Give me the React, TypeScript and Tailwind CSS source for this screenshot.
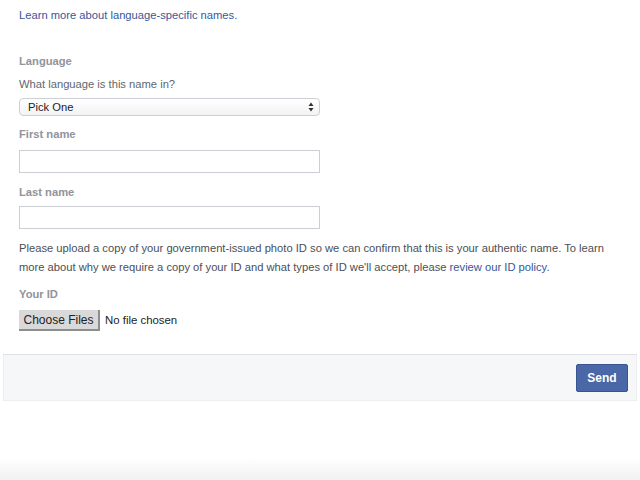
import React from 'react';

export default function App() {
  return (
    <div className="h-[480px] bg-white flex flex-col text-[11.2px] font-['Liberation_Sans',Arial,sans-serif]">
      <div className="px-[19px]">
        <p className="pt-[7px] leading-4 text-[#365899]">Learn more about language-specific names.</p>

        <div className="mt-[30px] leading-4 font-bold text-[#90949c]">Language</div>
        <div className="mt-[7px] leading-4 text-[#606770]">What language is this name in?</div>
        <div className="relative mt-[6px] h-[18px] w-[301px]">
          <select className="appearance-none w-full h-full rounded-[4px] border border-[#ccd0d5] bg-gradient-to-b from-white to-[#f3f3f3] pl-[8px] text-[11.2px] leading-4 text-[#1d2129] outline-none">
            <option>Pick One</option>
          </select>
          <svg className="absolute right-[6px] top-[4px] pointer-events-none" width="6" height="10" viewBox="0 0 6 10">
            <path d="M3 0.5 L5.5 4 H0.5 Z" fill="#333" />
            <path d="M3 9.5 L5.5 6 H0.5 Z" fill="#333" />
          </svg>
        </div>

        <div className="mt-[10px] leading-4 font-bold text-[#90949c]">First name</div>
        <input className="mt-[8px] block h-[23px] w-[301px] border border-[#ccd0d5] bg-white outline-none" />

        <div className="mt-[11px] leading-4 font-bold text-[#90949c]">Last name</div>
        <input className="mt-[6px] block h-[23px] w-[301px] border border-[#ccd0d5] bg-white outline-none" />

        <p className="mt-[10px] leading-[19px] text-[#4b4f56]">
          Please upload a copy of your government-issued photo ID so we can confirm that this is your authentic name. To learn more about why we require a copy of your ID and what types of ID we'll accept, please{' '}
          <span className="text-[#365899]">review our ID policy</span>.
        </p>

        <div className="mt-[9px] leading-4 font-bold text-[#90949c]">Your ID</div>
        <div className="mt-[8px] flex items-center h-[21px]">
          <button className="h-[21px] w-[81px] bg-[#d9d9d9] border-r-2 border-b-2 border-[#8e8e8e] text-[12px] text-[#222] leading-none">
            Choose Files
          </button>
          <span className="ml-[5px] text-[11.4px] text-[#222]">No file chosen</span>
        </div>
      </div>

      <div className="mt-[23px] mx-[3px] h-[47px] bg-[#f6f7f9] border border-[#eceef1] border-t-[#dfe1e5] flex justify-end items-start pt-[9px] pr-[8px]">
        <button className="h-[28px] w-[52px] rounded-[2px] bg-[#4a67a8] border border-[#3b5590] text-white font-bold text-[12px]">
          Send
        </button>
      </div>

      <div className="flex-1" />
      <div className="h-[22px] bg-gradient-to-b from-white to-[#f1f1f1]" />
    </div>
  );
}
